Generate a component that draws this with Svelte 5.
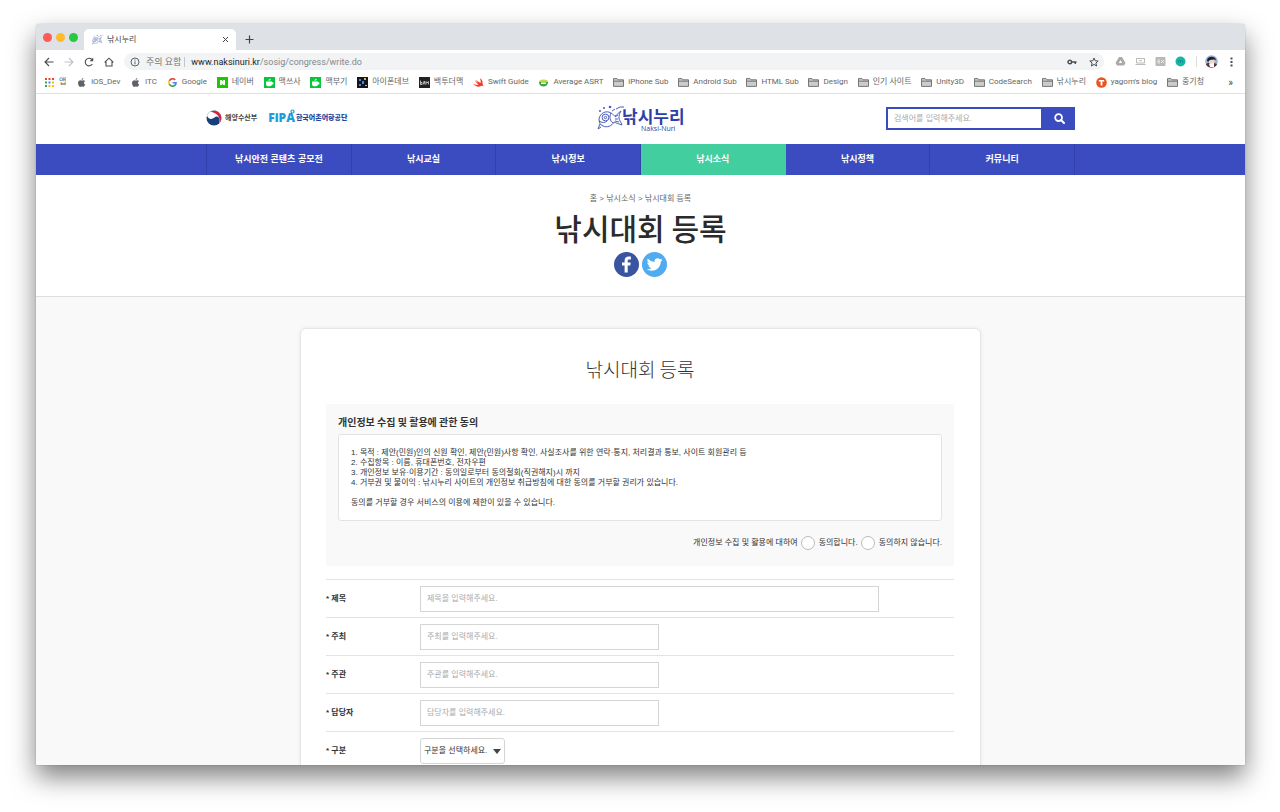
<script lang="ts">
  type Bookmark = { name: string; icon: string }
  type Field = { id: string; label: string; hint: string; wide?: boolean }

  const bookmarks: Bookmark[] = [
    { name: '앱', icon: 'apps' },
    { name: 'iOS_Dev', icon: 'apple' },
    { name: 'ITC', icon: 'apple' },
    { name: 'Google', icon: 'google' },
    { name: '네이버', icon: 'naver' },
    { name: '맥쓰사', icon: 'cafe' },
    { name: '맥부기', icon: 'cafe' },
    { name: '아이폰데브', icon: 'dev' },
    { name: '백투더맥', icon: 'b2m' },
    { name: 'Swift Guide', icon: 'swift' },
    { name: 'Average ASRT', icon: 'asrt' },
    { name: 'iPhone Sub', icon: 'folder' },
    { name: 'Android Sub', icon: 'folder' },
    { name: 'HTML Sub', icon: 'folder' },
    { name: 'Design', icon: 'folder' },
    { name: '인기 사이트', icon: 'folder' },
    { name: 'Unity3D', icon: 'folder' },
    { name: 'CodeSearch', icon: 'folder' },
    { name: '낚시누리', icon: 'folder' },
    { name: "yagom's blog", icon: 'tistory' },
    { name: '중기청', icon: 'folder' },
  ]

  const menus = ['낚시안전 콘텐츠 공모전', '낚시교실', '낚시정보', '낚시소식', '낚시정책', '커뮤니티']
  const current = '낚시소식'

  const fields: Field[] = [
    { id: 'title', label: '제목', hint: '제목을 입력해주세요.', wide: true },
    { id: 'host', label: '주최', hint: '주최를 입력해주세요.' },
    { id: 'organizer', label: '주관', hint: '주관를 입력해주세요.' },
    { id: 'manager', label: '담당자', hint: '담당자를 입력해주세요.' },
  ]

  const appColors = ['#ea4335', '#ea4335', '#ea4335', '#34a853', '#4285f4', '#fbbc05', '#34a853', '#fbbc05', '#fbbc05']

  let keyword = $state('')
  let agree = $state('')
  let values: Record<string, string> = $state({ title: '', host: '', organizer: '', manager: '' })
</script>

{#snippet fish()}
  <path d="M2 14C3 8 9 5 14 8C16 9 17 11 18 11C20 10 21 8 24 6C22 9 22 11 22 13C22 15 24 17 25 20C22 19 19 18 17 17C15 21 10 23 6 21C3 20 2 17 2 14Z" />
  <circle cx="8.5" cy="12.5" r="3.4" />
  <circle cx="8.5" cy="12.5" r="1.2" />
  <path d="M14 8C12 12 13 16 16 18M2 16C5 18 8 18 10 16M3 19L1 24L4 22M18 12L21 10M18 14H21M18 16L22 17M15 6L18 4M19 4L23 2L27 2" />
  <circle class="bubble" cx="7" cy="3" r="1" />
  <circle class="bubble" cx="13" cy="2" r="1.3" />
  <circle class="bubble" cx="3" cy="6" r="1" />
{/snippet}

{#snippet favicon(icon: string)}
  <svg class="ico" viewBox="0 0 11 11" aria-hidden="true">
    {#if icon === 'apps'}
      {#each appColors as color, i}
        <rect x={1 + (i % 3) * 3.5} y={1 + Math.floor(i / 3) * 3.5} width="2" height="2" fill={color} />
      {/each}
    {:else if icon === 'apple'}
      <path fill="#5f6368" d="M7.3 1C7.3 2.2 6.5 3 5.6 3C5.5 2 6.3 1.2 7.3 1ZM5.7 3.6C6.2 3.6 6.7 3.2 7.5 3.2C8.2 3.2 8.7 3.6 9 4C7.5 5 7.8 7 9.2 7.6C8.8 8.7 8 9.9 7.3 9.9C6.7 9.9 6.5 9.5 5.7 9.5C5 9.5 4.7 9.9 4.1 9.9C3.1 9.9 2 7.8 2 6.1C2 4.2 3.2 3.2 4.3 3.2C5 3.2 5.4 3.6 5.7 3.6Z" />
    {:else if icon === 'google'}
      <g fill="none" stroke-width="1.6">
        <path stroke="#ea4335" d="M8.2 3A3.6 3.6 0 0 0 2.3 3.8" />
        <path stroke="#fbbc05" d="M2.3 3.7A3.6 3.6 0 0 0 2.3 7.3" />
        <path stroke="#34a853" d="M2.3 7.2A3.6 3.6 0 0 0 8 8.2" />
        <path stroke="#4285f4" d="M7.9 8.3A3.6 3.6 0 0 0 9.1 5.7H5.6" />
      </g>
    {:else if icon === 'naver'}
      <rect width="11" height="11" fill="#1ec800" />
      <path fill="#fff" d="M3 3H5L6.2 5V3H8V8H6.2L4.8 6V8H3Z" />
    {:else if icon === 'cafe'}
      <rect width="11" height="11" fill="#06c73c" />
      <path fill="#fff" d="M2 4.5H8V5.3H9.3V7.5H8C7.7 8.6 7 9.2 6 9.2H4C2.6 9.2 2 8 2 7ZM4.5 3.7C4.5 2.5 5.5 2 6.8 1.8C6.7 3 6 3.7 4.5 3.7Z" />
    {:else if icon === 'dev'}
      <rect width="11" height="11" fill="#14161f" />
      <path fill="#4f83d8" d="M2 2H4V4H2ZM5 4H7V7H5ZM2 7H4V9H2Z" />
      <path fill="#d9b54b" d="M7 1H9V3H7ZM8 8H10V9H8Z" />
    {:else if icon === 'b2m'}
      <rect width="11" height="11" fill="#222" />
      <path fill="none" stroke="#ddd" stroke-width="0.8" d="M1.5 3.5V7.5H3V5.5H1.5M4.2 7.5L5.2 4L6 7.5M7 7.5V4.5L8.2 6L9.4 4.5V7.5" />
    {:else if icon === 'swift'}
      <path fill="#f23c26" d="M6.7 1C9.2 2.6 10 5 9.5 6.7C10.5 8 10.4 9 10.2 9.4C9.6 8.4 8.7 8.8 8 9.1C5 10.4 2 9.2 .5 6.8C2.3 8 4.2 8.2 5.6 7.5C3.8 6 2.3 4.2 1.5 2.9C3.1 4.2 4.6 5.2 5 5.4C3.9 4.2 3 2.9 2.8 2.5C4.6 4.2 6.6 5.5 7.6 6C7.9 4.3 7.6 2.5 6.7 1Z" />
    {:else if icon === 'asrt'}
      <ellipse cx="5.5" cy="5" rx="4.6" ry="2.6" fill="#c8d63a" />
      <path fill="#3aa844" d="M1 5H10C10 8 8 9.5 5.5 9.5C3 9.5 1 8 1 5Z" />
      <path fill="#fff" d="M3 5.5H8V7H3Z" />
    {:else if icon === 'tistory'}
      <circle cx="5.5" cy="5.5" r="5.3" fill="#eb531f" />
      <path fill="#fff" d="M2.8 3H8.2V4.6H6.4V8.6H4.6V4.6H2.8Z" />
    {:else}
      <path fill="#ccc" stroke="#6b6b6b" stroke-width="0.9" d="M.5 9.4V1.6H4L5 2.8H10.5V9.4ZM.5 4.2H10.5" />
    {/if}
  </svg>
{/snippet}

<div class="desktop">
  <div class="window">
    <div class="tabs">
      <div class="lights"><span class="close"></span><span class="min"></span><span class="max"></span></div>
      <div class="tab">
        <svg class="ico fish" viewBox="0 0 28 24" aria-hidden="true">{@render fish()}</svg>
        <span class="tab-name">낚시누리</span>
        <button class="plain" aria-label="탭 닫기">
          <svg width="7" height="7" viewBox="0 0 7 7"><path d="M1 1L6 6M6 1L1 6" stroke="#444" /></svg>
        </button>
      </div>
      <button class="plain new-tab" aria-label="새 탭">
        <svg width="9" height="9" viewBox="0 0 9 9"><path d="M4.5 .5V8.5M.5 4.5H8.5" stroke="#444" stroke-width="1.2" /></svg>
      </button>
    </div>

    <div class="toolbar">
      <div class="controls">
        <button class="plain" aria-label="뒤로">
          <svg width="10" height="10" viewBox="0 0 10 10"><path d="M9.5 5H1.2M5 1L1 5L5 9" fill="none" stroke="#4a4d51" stroke-width="1.1" /></svg>
        </button>
        <button class="plain" aria-label="앞으로">
          <svg width="10" height="10" viewBox="0 0 10 10"><path d="M.5 5H8.8M5 1L9 5L5 9" fill="none" stroke="#bfc1c4" stroke-width="1.1" /></svg>
        </button>
        <button class="plain" aria-label="새로고침">
          <svg width="10" height="10" viewBox="0 0 10 10"><path d="M8.3 7A3.8 3.8 0 1 1 7.8 2.4" fill="none" stroke="#4a4d51" stroke-width="1.1" /><path d="M9.2 .6V4.3H5.6Z" fill="#4a4d51" /></svg>
        </button>
        <button class="plain" aria-label="홈">
          <svg width="10" height="10" viewBox="0 0 10 10"><path d="M.6 5.3L5 1.2L9.4 5.3M2 4.5V9H8V4.5" fill="none" stroke="#4a4d51" stroke-width="1.1" /></svg>
        </button>
      </div>
      <div class="address">
        <svg width="10" height="10" viewBox="0 0 10 10"><circle cx="5" cy="5" r="4" fill="none" stroke="#5f6368" /><path d="M5 4.4V7.3M5 2.6V3.6" stroke="#5f6368" /></svg>
        <span class="warn">주의 요함</span>
        <span class="url"><b>www.naksinuri.kr</b>/sosig/congress/write.do</span>
        <svg width="10" height="6" viewBox="0 0 10 6"><circle cx="2.8" cy="3" r="1.8" fill="none" stroke="#4a4d51" stroke-width="1.4" /><path d="M4.5 3H9.5M8.3 3V5" stroke="#4a4d51" stroke-width="1.4" /></svg>
        <svg class="star" width="10" height="10" viewBox="0 0 10 10"><path d="M5 1L6.2 3.8L9.2 4L6.9 6L7.6 9L5 7.4L2.4 9L3.1 6L.8 4L3.8 3.8Z" fill="none" stroke="#4a4d51" /></svg>
      </div>
      <div class="extensions">
        <svg width="11" height="11" viewBox="0 0 11 11"><path d="M4 1H7L10.5 7L9 9.5H2L.5 7Z" fill="#aaa" /><path d="M5.5 4L7.2 7H3.8Z" fill="#fff" /></svg>
        <svg width="11" height="11" viewBox="0 0 11 11"><path d="M1.5 2.5H9.5V7H1.5ZM.5 8.5H10.5M4 4.7H7" fill="none" stroke="#aaa" stroke-width="0.8" /></svg>
        <svg width="11" height="11" viewBox="0 0 11 11"><rect x=".5" y="1" width="10" height="9" rx="1" fill="#b9b9b9" /><path d="M2.5 4H5M2.5 5.5H5M2.5 7H5M6 4L9 7M9 4L6 7" stroke="#fff" stroke-width="0.7" /></svg>
        <svg width="11" height="11" viewBox="0 0 11 11"><circle cx="5.5" cy="5.5" r="5" fill="#14b8a6" /><path d="M3.3 7V4.5H7.7V7M5.5 4.5V7" fill="none" stroke="#0c8c93" stroke-width="0.8" /></svg>
      </div>
      <svg class="avatar" width="13" height="13" viewBox="0 0 13 13">
        <circle cx="6.5" cy="6.5" r="6.3" fill="#9db4d0" />
        <path d="M1 9.5C3 7 5 8 6.5 8C9 8 11 8 12 9.5C10 13.5 3 13.5 1 9.5Z" fill="#5a2f3b" />
        <circle cx="6.5" cy="6.3" r="3" fill="#f1d6c4" />
        <path d="M2 5.5C2 1 10 0 11 5L8.5 4.5L5 5L3 7Z" fill="#1d2230" />
        <path d="M4 9L9 8V12H5Z" fill="#fff" />
      </svg>
      <button class="plain" aria-label="메뉴">
        <svg width="3" height="10" viewBox="0 0 3 10"><path d="M.5 .5H2.5V2.5H.5ZM.5 4H2.5V6H.5ZM.5 7.5H2.5V9.5H.5Z" fill="#4a4d51" /></svg>
      </button>
    </div>

    <nav class="bookmarks" aria-label="북마크">
      <div class="bookmark-list">
        {#each bookmarks as mark}
          <a class="bookmark" href="#bookmark">{@render favicon(mark.icon)}{mark.name}</a>
        {/each}
      </div>
      <button class="plain more" aria-label="북마크 더보기">»</button>
    </nav>

    <div class="page">
      <header class="site-header">
        <div class="container head">
          <div class="agencies">
            <a class="agency" href="#mof">
              <svg width="16" height="16" viewBox="0 0 16 16" aria-hidden="true">
                <circle cx="8" cy="8" r="7.5" fill="#183f7c" />
                <path d="M1 5.5C3 -.5 12 -1 15 5.5C16 9 14.5 12 13 13.5C15 8 11.5 5 8.5 7.5C5.5 10 2 9 1 5.5Z" fill="#fff" />
                <path d="M4.5 1.5C9 -.5 13 1.5 14.8 5C15.8 8 15 11 13.5 13C14.5 7 11.5 3.5 4.5 1.5Z" fill="#d8203f" />
              </svg>
              해양수산부
            </a>
            <a class="fipa" href="#fipa">
              <span class="fipa-mark">FiPA
                <svg class="ring" width="5" height="5" viewBox="0 0 5 5" aria-hidden="true"><circle cx="2.5" cy="2.5" r="1.5" fill="none" stroke="#1b9ddb" stroke-width="1.2" /></svg>
              </span>
              한국어촌어항공단
            </a>
          </div>
          <a class="logo" href="#home">
            <svg width="88" height="30" viewBox="0 0 88 30">
              <g class="fish" transform="translate(0 2)">{@render fish()}</g>
              <text class="logo-ko" x="25" y="20">낚시누리</text>
              <text class="logo-en" x="44" y="28">Naksi-Nuri</text>
            </svg>
          </a>
          <form class="search" onsubmit={(e) => e.preventDefault()}>
            <input type="text" aria-label="검색어" placeholder="검색어를 입력해주세요." bind:value={keyword} />
            <button aria-label="검색">
              <svg width="11" height="11" viewBox="0 0 11 11"><circle cx="4.6" cy="4.6" r="3.4" fill="none" stroke="#fff" stroke-width="1.8" /><path d="M7 7L10 10" stroke="#fff" stroke-width="2" stroke-linecap="round" /></svg>
            </button>
          </form>
        </div>
      </header>

      <nav class="menu" aria-label="주 메뉴">
        <div class="container menu-list">
          {#each menus as menu}
            <a href="#menu" class:active={menu === current}>{menu}</a>
          {/each}
        </div>
      </nav>

      <section class="title">
        <p class="crumbs">홈 &gt; 낚시소식 &gt; 낚시대회 등록</p>
        <h1>낚시대회 등록</h1>
        <div class="share">
          <a href="#facebook" aria-label="페이스북">
            <svg width="25" height="25" viewBox="0 0 25 25"><circle cx="12.5" cy="12.5" r="12.5" fill="#3a559f" /><path fill="#fff" d="M10.6 20.5V13.5H8V10.5H10.6V8.5C10.6 5.9 12.2 4.5 14.6 4.5C15.7 4.5 16.6 4.6 16.9 4.6V7.4H15.2C13.9 7.4 13.7 8 13.7 8.9V10.5H16.7L16.3 13.5H13.7V20.5Z" /></svg>
          </a>
          <a href="#twitter" aria-label="트위터">
            <svg width="25" height="25" viewBox="0 0 25 25"><circle cx="12.5" cy="12.5" r="12.5" fill="#50abf1" /><path fill="#fff" d="M20.5 7.7C19.9 8 19.3 8.2 18.6 8.2C19.3 7.8 19.8 7.2 20.1 6.4C19.4 6.8 18.7 7.1 17.9 7.2C16.7 6 15 5.9 13.8 6.8C12.7 7.6 12.3 8.7 12.5 9.9C9.8 9.8 7.4 8.5 5.8 6.5C4.9 8.1 5.4 9.9 6.8 10.9C6.3 10.9 5.8 10.7 5.3 10.5C5.3 12.1 6.4 13.4 7.9 13.7C7.4 13.9 6.9 13.9 6.5 13.8C6.9 15.1 8.1 16 9.5 16C8.2 17 6.6 17.5 4.9 17.3C6.4 18.3 8 18.7 9.7 18.7C15.5 18.7 18.9 13.9 18.8 9.5C19.5 9 20.1 8.4 20.5 7.7Z" /></svg>
          </a>
        </div>
      </section>

      <main>
        <form class="card" onsubmit={(e) => e.preventDefault()}>
          <h2>낚시대회 등록</h2>
          <section class="privacy">
            <h3>개인정보 수집 및 활용에 관한 동의</h3>
            <div class="terms">
              <p>
                1. 목적 : 제안(민원)인의 신원 확인, 제안(민원)사항 확인, 사실조사를 위한 연락·통지, 처리결과 통보, 사이트 회원관리 등<br />
                2. 수집항목 : 이름, 휴대폰번호, 전자우편<br />
                3. 개인정보 보유·이용기간 : 동의일로부터 동의철회(직권해지)시 까지<br />
                4. 거부권 및 불이익 : 낚시누리 사이트의 개인정보 취급방침에 대한 동의를 거부할 권리가 있습니다.
              </p>
              <p>동의를 거부할 경우 서비스의 이용에 제한이 있을 수 있습니다.</p>
            </div>
            <div class="agree" role="radiogroup" aria-labelledby="agree-text">
              <span id="agree-text">개인정보 수집 및 활용에 대하여</span>
              <label><input type="radio" name="agree" value="y" bind:group={agree} />동의합니다.</label>
              <label><input type="radio" name="agree" value="n" bind:group={agree} />동의하지 않습니다.</label>
            </div>
          </section>

          <div class="fields">
            {#each fields as field}
              <div class="row">
                <label for={field.id}>* {field.label}</label>
                <input id={field.id} class:wide={field.wide} type="text" placeholder={field.hint} bind:value={values[field.id]} />
              </div>
            {/each}
            <div class="row">
              <label for="kind">* 구분</label>
              <span class="select">
                <select id="kind"><option>구분을 선택하세요.</option></select>
                <svg class="caret" width="8" height="5" viewBox="0 0 8 5" aria-hidden="true"><path d="M0 0H8L4 5Z" fill="#444" /></svg>
              </span>
            </div>
          </div>
        </form>
      </main>
    </div>
  </div>
</div>

<style>
  :global(body) { background: #fff; overflow: hidden; }
  .desktop { box-sizing: border-box; height: 100vh; padding: 24px 35px 47px 36px; }
  .desktop :where(*) { box-sizing: border-box; }
  .window {
    display: flex; flex-direction: column; height: 100%; overflow: hidden;
    background: #fff; border-radius: 4px 4px 1px 1px;
    box-shadow: 0 0 1px rgba(0,0,0,0.5), 0 12px 26px rgba(0,0,0,0.5);
    font-family: 'Liberation Sans', 'Noto Sans CJK KR', sans-serif; font-size: 8px; line-height: 10px; color: #333;
  }
  a { color: inherit; text-decoration: none; }
  p, h1, h2, h3 { margin: 0; }
  h1, h2, h3 { font-family: 'Noto Sans CJK KR', sans-serif; }
  svg { display: block; flex-shrink: 0; }
  input, select, button { margin: 0; font-family: inherit; font-size: 8px; }
  input::placeholder { color: #aaa; opacity: 1; }
  .plain { padding: 0; border: none; background: none; cursor: pointer; }
  .ico { width: 11px; height: 11px; }
  .fish { fill: none; stroke: #4a5db5; stroke-width: 1; }
  .bubble { fill: #4a5db5; stroke: none; }

  /* browser frame */
  .tabs { display: flex; align-items: flex-end; height: 26px; flex-shrink: 0; background: #dee1e6; }
  .lights { display: flex; gap: 4px; padding: 0 6px 8px 7px; }
  .lights span { width: 9px; height: 9px; border-radius: 50%; }
  .close { background: #fc5b57; }
  .min { background: #fdbc2e; }
  .max { background: #28c840; }
  .tab {
    display: flex; align-items: center; gap: 4px; width: 152px; height: 21px;
    padding: 0 7px 0 8px; background: #fff; border-radius: 5px 5px 0 0;
  }
  .tab-name { flex: 1; color: #444; }
  .new-tab { padding: 0 0 6px 9px; }
  .toolbar { display: flex; align-items: center; gap: 8px; height: 23px; flex-shrink: 0; padding: 0 12px 0 8px; }
  .controls { display: flex; gap: 10px; padding-right: 2px; }
  .address {
    flex: 1; display: flex; align-items: center; gap: 6px; height: 17px; padding: 0 5px 0 6px;
    background: #f1f3f4; border-radius: 9px;
    font-family: Roboto, 'Noto Sans CJK KR', sans-serif; font-size: 9px;
  }
  .warn { color: #777; border-right: 1px solid #c4c6c9; padding-right: 3px; }
  .url { flex: 1; color: #85888c; }
  .url b { font-weight: 400; color: #222; }
  .star { margin-left: 6px; }
  .extensions { display: flex; gap: 9px; padding: 0 10px 0 3px; border-right: 1px solid #ddd; }
  .avatar { margin-right: 4px; }
  .bookmarks {
    display: flex; align-items: center; height: 21px; flex-shrink: 0; padding: 0 12px 2px 8px;
    border-bottom: 1px solid #e1e1e1; color: #666;
    font-family: Roboto, 'Noto Sans CJK KR', sans-serif; white-space: nowrap;
  }
  .bookmark-list { flex: 1; display: flex; justify-content: space-between; }
  .bookmark { display: flex; align-items: center; gap: 4px; }
  .more { padding-left: 24px; font-size: 10px; color: #444; }

  /* site */
  .page { flex: 1; display: flex; flex-direction: column; min-height: 0; overflow: hidden; }
  .container { width: 100%; max-width: 869px; margin: 0 auto; }
  .site-header { flex-shrink: 0; }
  .head { display: grid; grid-template-columns: 1fr auto 1fr; align-items: center; height: 50px; padding-bottom: 2px; }
  .agencies { display: flex; align-items: center; gap: 11px; }
  .agency { display: flex; align-items: center; gap: 3px; font-size: 7px; font-weight: 700; color: #444; }
  .fipa { display: flex; align-items: center; gap: 1px; font-size: 7px; font-weight: 900; color: #24479b; }
  .fipa-mark { position: relative; font-family: 'Open Sans', sans-serif; font-size: 12px; font-weight: 800; color: #1b9ddb; }
  .ring { position: absolute; top: -4px; right: 0; }
  .logo-ko { font-size: 17px; font-weight: 700; fill: #2c3fa8; }
  .logo-en { font-family: 'Open Sans', sans-serif; font-size: 7px; fill: #2c3fa8; }
  .search { display: flex; justify-self: end; width: 189px; height: 23px; }
  .search input { flex: 1; min-width: 0; padding: 0 6px; border: 2px solid #3a4cc0; border-radius: 0; }
  .search button { display: grid; place-items: center; width: 32px; border: none; background: #3a4cc0; }
  .menu { flex-shrink: 0; background: #3a4cc0; }
  .menu-list { display: grid; grid-template-columns: repeat(6, 1fr); border-left: 1px solid #3141aa; }
  .menu a {
    height: 31px; border-right: 1px solid #3141aa; text-align: center;
    font-size: 9px; font-weight: 700; line-height: 30px; color: #fff;
  }
  .menu a.active { background: #42ce9e; border-color: #42ce9e; }
  .title {
    flex-shrink: 0; display: flex; flex-direction: column; align-items: center;
    padding: 19px 0; border-bottom: 1px solid #ddd;
  }
  .crumbs { color: #666; }
  .title h1 { margin-bottom: 2px; font-size: 30px; font-weight: 500; line-height: 46px; color: #2b2b2b; }
  .share { display: flex; gap: 3px; }
  main { flex: 1; min-height: 0; padding: 31px 20px 0; background: #f9f9f9; }
  .card {
    max-width: 681px; margin: 0 auto; padding: 25px 26px 40px 25px;
    background: #fff; border: 1px solid #e6e6e6; border-radius: 6px; box-shadow: 0 0 4px rgba(0,0,0,0.07);
  }
  .card h2 { font-size: 19px; font-weight: 300; line-height: 30px; text-align: center; color: #333; }
  .privacy { margin-top: 20px; padding: 13px 12px 16px; background: #f9f9f9; }
  .privacy h3 { font-size: 10px; font-weight: 700; line-height: 10px; }
  .terms { margin-top: 7px; padding: 13px 12px 12px; background: #fff; border: 1px solid #e3e3e3; border-radius: 3px; }
  .terms p + p { margin-top: 10px; }
  .agree { display: flex; justify-content: flex-end; gap: 3px; margin-top: 15px; line-height: 14px; }
  .agree label { display: flex; gap: 4px; }
  .agree input { appearance: none; width: 14px; height: 14px; background: #fff; border: 1px solid #bbb; border-radius: 50%; }
  .agree input:checked { background: #3a4cc0; box-shadow: inset 0 0 0 3px #fff; }
  .fields { margin-top: 13px; }
  .row { display: flex; align-items: center; height: 38px; border-top: 1px solid #e3e3e3; }
  .row label { width: 94px; font-weight: 700; }
  .row input { width: 239px; height: 26px; padding: 0 6px; border: 1px solid #d5d5d5; border-radius: 0; }
  .row input.wide { width: 459px; }
  .select { position: relative; }
  .select select {
    display: block; width: 85px; height: 26px; padding: 0 3px; appearance: none;
    background: #fff; border: 1px solid #d5d5d5; border-radius: 3px; color: #333;
  }
  .caret { position: absolute; top: 11px; right: 4px; pointer-events: none; }
</style>
